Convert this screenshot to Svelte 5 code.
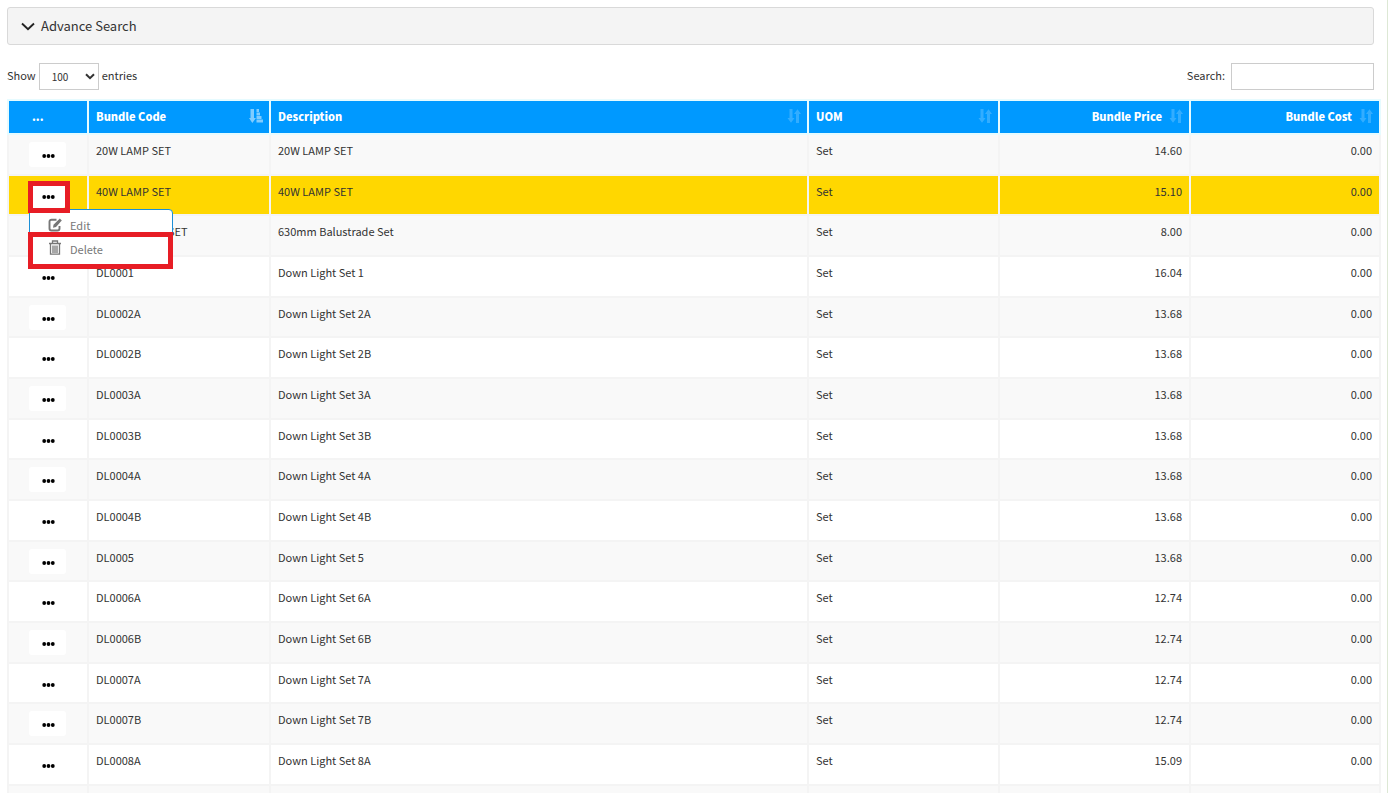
<script lang="ts">
  type Bundle = { code: string; description: string; uom: string; price: string; cost: string };

  const item = (code: string, description: string, price: string): Bundle => ({
    code,
    description,
    uom: 'Set',
    price,
    cost: '0.00'
  });

  const bundles: Bundle[] = [
    item('20W LAMP SET', '20W LAMP SET', '14.60'),
    item('40W LAMP SET', '40W LAMP SET', '15.10'),
    item('630mm Balus SET', '630mm Balustrade Set', '8.00'),
    item('DL0001', 'Down Light Set 1', '16.04'),
    item('DL0002A', 'Down Light Set 2A', '13.68'),
    item('DL0002B', 'Down Light Set 2B', '13.68'),
    item('DL0003A', 'Down Light Set 3A', '13.68'),
    item('DL0003B', 'Down Light Set 3B', '13.68'),
    item('DL0004A', 'Down Light Set 4A', '13.68'),
    item('DL0004B', 'Down Light Set 4B', '13.68'),
    item('DL0005', 'Down Light Set 5', '13.68'),
    item('DL0006A', 'Down Light Set 6A', '12.74'),
    item('DL0006B', 'Down Light Set 6B', '12.74'),
    item('DL0007A', 'Down Light Set 7A', '12.74'),
    item('DL0007B', 'Down Light Set 7B', '12.74'),
    item('DL0008A', 'Down Light Set 8A', '15.09')
  ];

  const columns = [
    { label: 'Bundle Code', sorted: true, numeric: false },
    { label: 'Description', sorted: false, numeric: false },
    { label: 'UOM', sorted: false, numeric: false },
    { label: 'Bundle Price', sorted: false, numeric: true },
    { label: 'Bundle Cost', sorted: false, numeric: true }
  ];

  let pageSize = $state('100');
  let search = $state('');
  let openRow = $state(1);

  function toggleMenu(idx: number) {
    openRow = openRow === idx ? -1 : idx;
  }
</script>

<main class="page">
  <button class="advance">
    <svg width="14" height="9" viewBox="0 0 14 9" aria-hidden="true">
      <path d="M1 1.500 7 7.300l6-5.800" fill="none" stroke="#222" stroke-width="1.900" />
    </svg>
    Advance Search
  </button>

  <div class="toolbar">
    <label>
      Show
      <span class="select">
        <select bind:value={pageSize}>
          <option>10</option>
          <option>25</option>
          <option>50</option>
          <option>100</option>
        </select>
        <svg width="10" height="7" viewBox="0 0 10 7" aria-hidden="true">
          <path d="M1 1.200 5 5.200l4-4" fill="none" stroke="#333" stroke-width="2" />
        </svg>
      </span>
      entries
    </label>
    <label class="search">
      Search:
      <input type="text" bind:value={search} />
    </label>
  </div>

  <table>
    <colgroup>
      <col class="c-menu" />
      <col class="c-code" />
      <col />
      <col class="c-num" />
      <col class="c-num" />
      <col class="c-cost" />
    </colgroup>
    <thead>
      <tr>
        <th class="dots">...</th>
        {#each columns as col}
          <th class:numeric={col.numeric}>
            <div class="head">
              <span>{col.label}</span>
              {#if col.sorted}
                <svg class="sorted" width="14" height="14" viewBox="0 0 14 14" aria-hidden="true">
                  <path d="M1.500 0h3.500v9h2l-3.700 5L0 9h1.500zM7.500 0h2.500v3H7.500zM7.500 3.500h3.500v3H7.500zM7.500 7h5v3H7.500zM7.500 10.500h6.500v3H7.500z" />
                </svg>
              {:else}
                <svg width="14" height="14" viewBox="0 0 14 14" aria-hidden="true">
                  <path d="M2.500 0h3v9h2L4 13.800.5 9h2zM9 14h3V5h2L10.500.2 7 5h2z" />
                </svg>
              {/if}
            </div>
          </th>
        {/each}
      </tr>
    </thead>
    <tbody>
      {#each bundles as row, idx}
        <tr class:selected={idx === openRow}>
          <td class="actions">
            <div class="anchor">
              <button class="more" aria-label="Row actions" onclick={() => toggleMenu(idx)}>
                <svg width="13" height="4" viewBox="0 0 13 4" aria-hidden="true">
                  <circle cx="2.200" cy="2" r="1.900" />
                  <circle cx="6.500" cy="2" r="1.900" />
                  <circle cx="10.800" cy="2" r="1.900" />
                </svg>
              </button>
              {#if idx === openRow}
                <div class="menu">
                  <button>
                    <svg width="14" height="14" viewBox="0 0 14 14" aria-hidden="true">
                      <path d="M8.500 1.700H3.500a2 2 0 0 0-2 2v6.800a2 2 0 0 0 2 2h6a2 2 0 0 0 2-2V8" fill="none" stroke="#777" stroke-width="1.900" />
                      <path d="M5 9.800l.5-3L11.800.5l2 2L8 9.100z" fill="#777" />
                    </svg>
                    Edit
                  </button>
                  <button>
                    <svg class="trash" width="14" height="16" viewBox="0 0 14 16" aria-hidden="true">
                      <path d="M1 3.500h12M4.500 3V1h5v2M2.500 4v10.200h9V4M5 5.500V13M7 5.500V13M9 5.500V13" fill="none" stroke="#777" stroke-width="1.300" />
                    </svg>
                    Delete
                  </button>
                </div>
                <span class="mark mark-more"></span>
                <span class="mark mark-delete"></span>
              {/if}
            </div>
          </td>
          <td>{row.code}</td>
          <td>{row.description}</td>
          <td>{row.uom}</td>
          <td class="numeric">{row.price}</td>
          <td class="numeric">{row.cost}</td>
        </tr>
      {/each}
      <tr aria-hidden="true">
        <td></td>
        {#each columns as _}
          <td></td>
        {/each}
      </tr>
    </tbody>
  </table>
</main>

<style>
  :global(body) {
    margin: 0;
    background: #fff;
  }

  .page {
    box-sizing: border-box;
    height: 100vh;
    overflow: hidden;
    padding: 7px 13px 0 7px;
    border-right: 1px solid #dde8d5;
    font-family: 'Noto Sans CJK SC', 'Noto Sans', sans-serif;
    font-size: 11px;
    line-height: 18px;
    color: #333;
  }

  button,
  input,
  select {
    font: inherit;
    color: inherit;
  }

  .advance {
    display: flex;
    align-items: center;
    gap: 6px;
    width: 100%;
    height: 38px;
    padding: 0 13px;
    background: #f4f4f4;
    border: 1px solid #d9d9d9;
    border-radius: 3px;
    font-size: 13px;
    text-align: left;
  }

  .toolbar {
    display: flex;
    justify-content: space-between;
    margin: 18px 0 9px;
  }

  label {
    display: flex;
    align-items: flex-start;
    gap: 3px;
    line-height: 25px;
  }

  .search {
    gap: 6px;
  }

  .select {
    display: grid;
    align-items: center;
  }

  .select > * {
    grid-area: 1 / 1;
  }

  .select svg {
    justify-self: end;
    margin-right: 4px;
    pointer-events: none;
  }

  select,
  input {
    box-sizing: border-box;
    height: 27px;
    background: #fff;
    border: 1px solid #ccc;
    border-radius: 0;
  }

  select {
    appearance: none;
    width: 60px;
    padding: 0 12px;
    font-size: 10px;
  }

  input {
    width: 143px;
    padding: 0 6px;
  }

  table {
    width: calc(100% + 7px);
    table-layout: fixed;
    border-collapse: collapse;
  }

  .c-menu {
    width: 80px;
  }

  .c-code {
    width: 182px;
  }

  .c-num {
    width: 191px;
  }

  .c-cost {
    width: 190px;
  }

  th,
  td {
    box-sizing: border-box;
    border: 2px solid #f4f4f4;
    padding: 6px 7px 0;
    text-align: left;
    vertical-align: top;
  }

  th {
    height: 34px;
    padding-right: 6px;
    background: #09f;
    border-color: #e6fbff;
    color: #fff;
    font-weight: 900;
  }

  th.dots {
    padding-left: 23px;
  }

  .head {
    display: flex;
    align-items: center;
    justify-content: space-between;
  }

  .numeric .head {
    justify-content: flex-end;
    gap: 7px;
  }

  .head svg {
    fill: #fff;
    opacity: 0.2;
  }

  .head svg.sorted {
    opacity: 0.5;
  }

  tbody tr {
    height: 41px;
  }

  tbody tr:nth-child(3n + 2) {
    height: 40px;
  }

  tbody tr:nth-child(odd) {
    background: #f9f9f9;
  }

  tbody tr.selected {
    background: gold;
  }

  .numeric {
    text-align: right;
  }

  .actions {
    padding: 7px 0 0 20px;
  }

  .anchor {
    position: relative;
    width: 37px;
    height: 25px;
  }

  .more {
    display: grid;
    place-items: center;
    width: 100%;
    height: 100%;
    padding: 2px 0 0 1px;
    background: #fff;
    border: 0;
    border-radius: 3px;
  }

  .menu {
    position: absolute;
    top: 26px;
    left: 0;
    z-index: 1;
    box-sizing: border-box;
    width: 144px;
    padding: 3px 0 5px;
    background: #fff;
    border: 1px solid #1b8fd6;
    border-radius: 4px;
  }

  .menu button {
    display: flex;
    align-items: center;
    gap: 8px;
    width: 100%;
    height: 24px;
    padding: 0 18px;
    background: none;
    border: 0;
    color: #777;
  }

  .menu .trash {
    margin-bottom: 3px;
  }

  .mark {
    position: absolute;
    z-index: 2;
    box-sizing: border-box;
    border: 5px solid #e71d25;
    pointer-events: none;
  }

  .mark-more {
    top: -2px;
    left: -1px;
    width: 42px;
    height: 32px;
  }

  .mark-delete {
    top: 49px;
    left: -1px;
    width: 145px;
    height: 37px;
  }
</style>
